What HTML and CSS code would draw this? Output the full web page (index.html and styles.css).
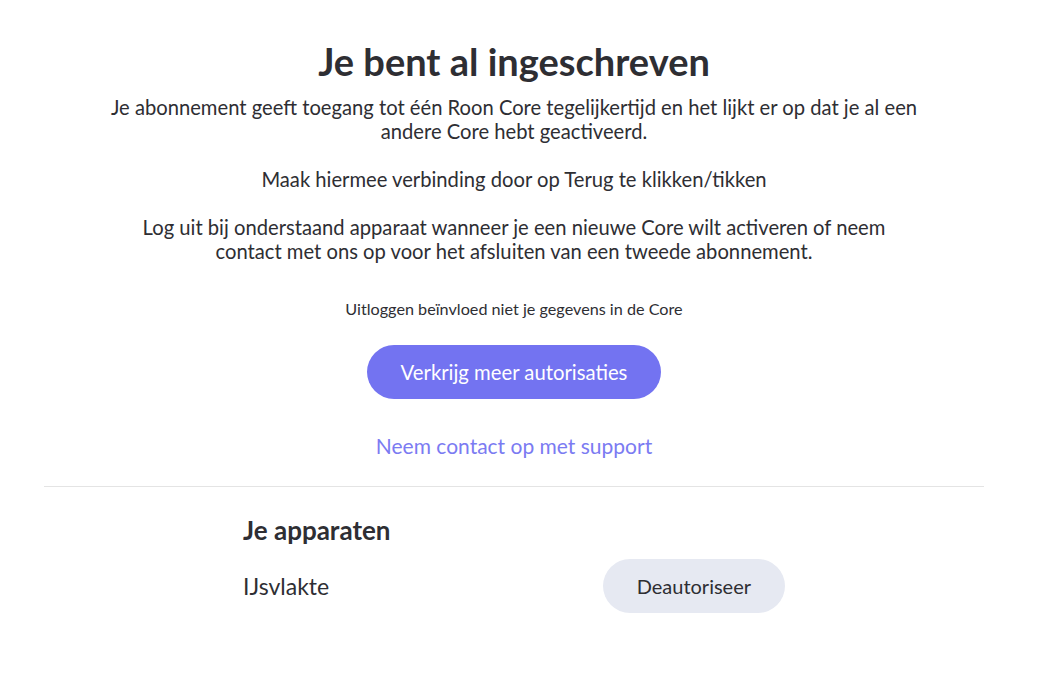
FILE: index.html
```html
<!DOCTYPE html>
<html lang="nl">
<head>
    <meta charset="UTF-8">
    <meta name="viewport" content="width=device-width, initial-scale=1.0">
    <title>Je bent al ingeschreven</title>
    <link rel="stylesheet" href="styles.css">
</head>
<body>
    <main class="page">
        <!-- Uitleg over het abonnement -->
        <section class="intro">
            <h1>Je bent al ingeschreven</h1>
            <p>Je abonnement geeft toegang tot één Roon Core tegelijkertijd en het lijkt er op dat je al een andere Core hebt geactiveerd.</p>
            <p>Maak hiermee verbinding door op Terug te klikken/tikken</p>
            <p>Log uit bij onderstaand apparaat wanneer je een nieuwe Core wilt activeren of neem contact met ons op voor het afsluiten van een tweede abonnement.</p>
            <p class="note">Uitloggen beïnvloed niet je gegevens in de Core</p>
            <button class="btn-primary">Verkrijg meer autorisaties</button>
            <a class="support-link" href="#">Neem contact op met support</a>
        </section>

        <hr class="divider">

        <!-- Lijst met apparaten -->
        <section class="devices">
            <h2>Je apparaten</h2>
            <div class="device-row">
                <span class="device-name">IJsvlakte</span>
                <button class="btn-secondary">Deautoriseer</button>
            </div>
        </section>
    </main>
</body>
</html>
```

FILE: styles.css
```css
body {
    margin: 0;
    font-family: Lato, "Open Sans", sans-serif;
    color: #2e2e33;
    background-color: #ffffff;
}

.page {
    padding: 38px 67px 40px 44px;
}

.intro {
    display: flex;
    flex-direction: column;
    align-items: center;
    text-align: center;
}

h1 {
    font-size: 38px;
    line-height: 46px;
    font-weight: 700;
    margin: 0 0 11px;
}

.intro p {
    max-width: 810px;
    font-size: 20.2px;
    line-height: 24px;
    margin: 0 0 24px;
}

.intro p.note {
    font-size: 16.2px;
    line-height: 20px;
    margin: 12px 0 26px;
}

/* Knoppen */
.btn-primary {
    height: 54px;
    padding: 0 34px;
    border: none;
    border-radius: 27px;
    background-color: #7373f1;
    color: #ffffff;
    font-family: inherit;
    font-size: 20.3px;
    cursor: pointer;
}

.support-link {
    margin-top: 35px;
    font-size: 21px;
    line-height: 24px;
    color: #7b7bf2;
    text-decoration: none;
}

.divider {
    border: none;
    border-top: 1px solid #e4e4e4;
    margin: 28px 0 0;
}

.devices {
    max-width: 542px;
    margin: 0 auto;
    padding-top: 27px;
}

.devices h2 {
    font-size: 26px;
    line-height: 32px;
    font-weight: 700;
    margin: 0 0 13px;
}

.device-row {
    display: flex;
    justify-content: space-between;
    align-items: center;
}

.device-name {
    font-size: 23px;
}

.btn-secondary {
    height: 54px;
    padding: 0 34px;
    border: none;
    border-radius: 27px;
    background-color: #e6e9f2;
    color: #2e2e33;
    font-family: inherit;
    font-size: 20px;
    cursor: pointer;
}
```
